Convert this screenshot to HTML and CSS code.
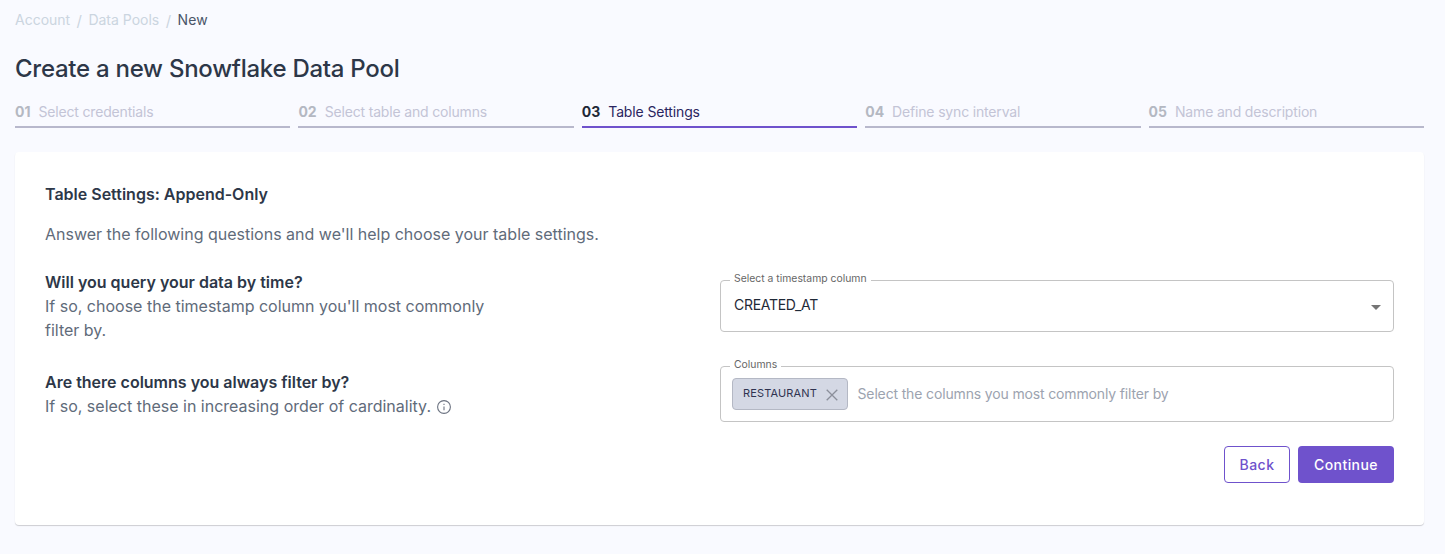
FILE: index.html
```html
<!DOCTYPE html>
<html lang="en">
<head>
<meta charset="utf-8">
<title>Create a new Snowflake Data Pool</title>
<link rel="stylesheet" href="styles.css">
</head>
<body>
<main class="page">
  <nav class="crumbs">
    <span class="crumb">Account</span><span class="sep">/</span>
    <span class="crumb">Data Pools</span><span class="sep">/</span>
    <span class="crumb-current">New</span>
  </nav>
  <h1 class="title">Create a new Snowflake Data Pool</h1>
  <ol class="steps">
    <li class="step"><b class="num">01</b><span class="label">Select credentials</span></li>
    <li class="step"><b class="num">02</b><span class="label">Select table and columns</span></li>
    <li class="step active"><b class="num">03</b><span class="label">Table Settings</span></li>
    <li class="step"><b class="num">04</b><span class="label">Define sync interval</span></li>
    <li class="step"><b class="num">05</b><span class="label">Name and description</span></li>
  </ol>
  <section class="card">
    <h2 class="card-title">Table Settings: Append-Only</h2>
    <p class="intro">Answer the following questions and we'll help choose your table settings.</p>
    <div class="form">
      <div class="questions">
        <div class="question">
          <h3 class="q-title">Will you query your data by time?</h3>
          <p class="q-text">If so, choose the timestamp column you'll most commonly filter by.</p>
        </div>
        <div class="question">
          <h3 class="q-title">Are there columns you always filter by?</h3>
          <p class="q-text">If so, select these in increasing order of cardinality.
            <svg class="info" width="14" height="14" viewBox="0 0 14 14" fill="none" stroke="#6b7280" stroke-width="1.1"><circle cx="7" cy="7" r="6.4"/><path d="M7 6.4v3.8"/><path d="M7 3.7v1.2"/></svg>
          </p>
        </div>
      </div>
      <div class="fields">
        <fieldset class="field select-field">
          <legend class="legend">Select a timestamp column</legend>
          <span class="value">CREATED_AT</span>
          <svg class="caret" width="10" height="5" viewBox="0 0 10 5"><path d="M0 0h10L5 5z" fill="#757575"/></svg>
        </fieldset>
        <fieldset class="field tags-field">
          <legend class="legend">Columns</legend>
          <span class="chip">RESTAURANT
            <svg class="chip-x" width="12" height="12" viewBox="0 0 12 12" fill="none" stroke="#8b8f9a" stroke-width="1.3"><path d="M.7.7l10.6 10.6M11.3.7L.7 11.3"/></svg>
          </span>
          <span class="placeholder">Select the columns you most commonly filter by</span>
        </fieldset>
      </div>
    </div>
    <div class="actions">
      <button class="btn btn-back" type="button">Back</button>
      <button class="btn btn-next" type="button">Continue</button>
    </div>
  </section>
</main>
</body>
</html>
```
FILE: styles.css
```css
* { box-sizing: border-box; }
html, body { margin: 0; padding: 0; }
body { background: #f9faff; font-family: Inter, "Liberation Sans", sans-serif; color: #2d3748; height: 554px; overflow: hidden; }
.page { padding: 11px 21px 0 15px; }
.crumbs { display: flex; align-items: center; font-size: 14px; line-height: 17px; height: 17px; }
.crumb { color: #cbd5e0; }
.crumb-current { color: #4a5568; letter-spacing: .2px; }
.sep { color: #cbd5e0; margin: 2px 6.4px 0; font-size: 15px; }
.title { margin: 24px 0 0; font-size: 24px; line-height: 34px; font-weight: 500; letter-spacing: -.26px; color: #2d3748; }
.steps { list-style: none; margin: 15px 0 0; padding: 0; display: grid; grid-template-columns: repeat(5, 1fr); gap: 8px; }
.step { height: 27px; border-bottom: 2px solid #b8b8cc; display: flex; align-items: flex-start; font-size: 14px; line-height: 17px; padding-top: 2px; }
.num { font-weight: 700; color: #b4b8c2; margin-right: 8px; }
.label { color: #c3c4d6; letter-spacing: -.17px; }
.step.active { border-bottom-color: #6f52cc; }
.step.active .num { color: #1f2937; }
.step.active .label { color: #2a2560; letter-spacing: -.14px; }
.card { margin-top: 24px; height: 373px; background: #fff; border-radius: 4px; box-shadow: 0 1px 1px rgba(0,0,0,.18); padding: 32px 30px 0; }
.card-title { margin: 0; font-size: 16px; line-height: 20px; font-weight: 600; color: #2d3748; }
.intro { margin: 20px 0 0; font-size: 16px; line-height: 20px; color: #5f6b7a; }
.form { margin-top: 26px; display: grid; grid-template-columns: 675px 674px; }
.questions { display: flex; flex-direction: column; gap: 28px; }
.question { max-width: 460px; }
.q-title { margin: 0; font-size: 16px; line-height: 24px; font-weight: 600; color: #2d3748; }
.q-text { margin: 0; font-size: 16px; line-height: 24px; color: #5f6b7a; }
.info { vertical-align: -2px; margin-left: 2px; }
.fields { display: flex; flex-direction: column; gap: 29px; padding-top: 5px; }
.field { margin: 0; padding: 0 13px; border: 1px solid #c4c4c4; border-radius: 4px; min-width: 0; background: #fff; position: relative; }
.legend { font-size: 10.4px; line-height: 10px; padding: 0 4px; margin-left: -4px; color: #666; position: relative; top: -1px; }
.select-field { height: 57px; display: block; }
.tags-field { height: 61px; }
.value { display: block; font-size: 14px; line-height: 17px; letter-spacing: -.3px; color: #1f2937; padding-top: 11px; }
.caret { position: absolute; right: 12px; top: 20px; }
.chip { display: inline-flex; align-items: center; height: 32px; padding: 0 9px 2px 10px; background: #d4d8e4; border: 1px solid #b4b8c4; border-radius: 4px; font-size: 11px; letter-spacing: .15px; color: #2f3350; margin: 7px 0 0 -2px; vertical-align: top; }
.chip-x { margin: 3px 0 0 9px; }
.placeholder { display: inline-block; font-size: 14px; line-height: 32px; letter-spacing: -.15px; color: #9ca3af; margin: 7px 0 0 5px; vertical-align: top; }
.actions { margin-top: 24px; display: flex; justify-content: flex-end; gap: 8px; }
.btn { height: 37px; border-radius: 4px; font: 450 14px Inter, "Liberation Sans", sans-serif; letter-spacing: .45px; cursor: pointer; }
.btn-back { width: 66px; background: #fff; color: #6f52cc; border: 1px solid #6f52cc; }
.btn-next { width: 96px; background: #6f52cc; color: #fff; border: 0; }
```
